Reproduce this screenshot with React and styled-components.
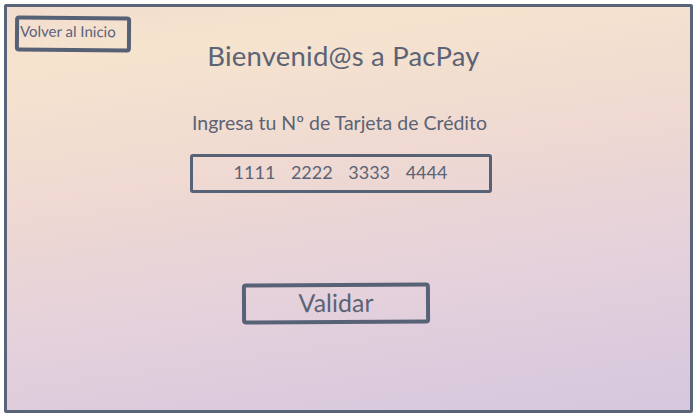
import React from 'react';
import styled, { createGlobalStyle } from 'styled-components';

const GlobalStyle = createGlobalStyle`
  html, body {
    margin: 0;
    padding: 0;
    background: #ffffff;
  }
  body {
    font-family: Lato, 'Noto Sans', sans-serif;
    color: #5b6375;
  }
`;

const Frame = styled.div`
  box-sizing: border-box;
  width: 689px;
  height: 409px;
  margin: 4px 0 0 4px;
  border: 3px solid #5a6478;
  border-radius: 2px;
  background: linear-gradient(
    172deg,
    #f2dccf 0%,
    #f6e4ce 12%,
    #efd9d2 40%,
    #e3d0dc 70%,
    #d6c7de 100%
  );
  display: flex;
  flex-direction: column;
  align-items: center;
  padding: 9px 18px 0 8px;
`;

const Header = styled.header`
  width: 100%;
  display: grid;
  grid-template-columns: 1fr auto 1fr;
  align-items: start;
`;

const BackButton = styled.button`
  justify-self: start;
  box-sizing: border-box;
  width: 116px;
  height: 36px;
  border: 4px solid #566176;
  border-radius: 4px;
  background: transparent;
  padding: 2px 0 0 1px;
  display: flex;
  align-items: flex-start;
  font-family: inherit;
  font-size: 15px;
  line-height: 18px;
  color: #59617a;
  transform: rotate(0.4deg);
  cursor: pointer;
`;

const Title = styled.h1`
  margin: 24px 0 0;
  font-size: 27.5px;
  font-weight: 400;
  line-height: 32px;
  color: #5b6375;
  letter-spacing: 0.2px;
`;

const Prompt = styled.p`
  margin: 39px 8px 0 0;
  font-size: 19.5px;
  line-height: 24px;
  color: #5b6375;
`;

const CardInput = styled.div`
  box-sizing: border-box;
  width: 302px;
  height: 39px;
  margin: 19px 6px 0 0;
  border: 3px solid #586277;
  border-radius: 3px;
  display: flex;
  align-items: center;
  justify-content: center;
  padding-bottom: 3px;
  font-size: 18px;
  word-spacing: 11px;
  color: #5b6375;
  white-space: pre;
`;

const SubmitButton = styled.button`
  box-sizing: border-box;
  width: 188px;
  height: 41px;
  margin: 90px 15px 0 0;
  border: 4px solid #586277;
  border-radius: 4px;
  background: transparent;
  font-family: inherit;
  font-size: 25px;
  color: #5b6375;
  padding: 0 0 8px;
  transform: rotate(-0.3deg);
  cursor: pointer;
`;

export default function App() {
  return (
    <>
      <GlobalStyle />
      <Frame>
        <Header>
          <BackButton>Volver al Inicio</BackButton>
          <Title>Bienvenid@s a PacPay</Title>
          <span />
        </Header>
        <Prompt>Ingresa tu Nº de Tarjeta de Crédito</Prompt>
        <CardInput>1111 2222 3333 4444</CardInput>
        <SubmitButton>Validar</SubmitButton>
      </Frame>
    </>
  );
}
